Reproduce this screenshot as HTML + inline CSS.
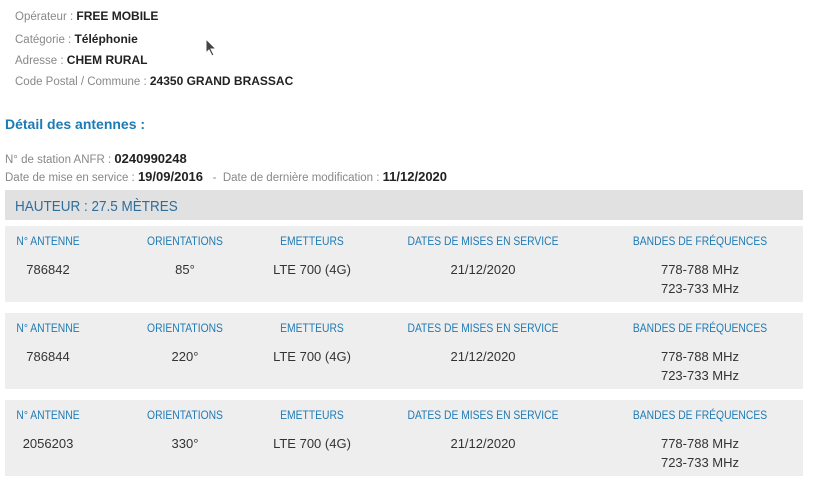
<!DOCTYPE html><html><head><meta charset="utf-8"><style>
body{margin:0;width:813px;height:482px;background:#fff;font-family:"Liberation Sans",sans-serif;position:relative;overflow:hidden}
.l{position:absolute;font-size:11.5px;color:#888;white-space:nowrap}
.l b{color:#222;font-size:12px;font-weight:bold}
.s b{font-size:13px}
.t{position:absolute;left:5px;top:116px;font-size:14px;color:#1b7bb5;font-weight:bold}
.hd{position:absolute;left:5px;top:190px;width:798px;height:30px;background:#e1e1e1;color:#2d6e9c}
.hd span{position:absolute;left:10px;top:8px;font-size:15px;transform:scaleX(0.9);transform-origin:0 0;white-space:nowrap}
.bx{position:absolute;left:5px;width:798px;height:76px;background:#eee}
.c{position:absolute;transform:translateX(-50%) scaleX(0.86);text-align:center;white-space:nowrap}
.h{top:8px;color:#1f7ab5;font-size:12px}
.v{top:34px;color:#333;font-size:13px;line-height:19px;transform:translateX(-50%)}
</style></head><body>
<div class="l" style="left:15px;top:9px">Opérateur : <b>FREE MOBILE</b></div>
<div class="l" style="left:15px;top:32px">Catégorie : <b>Téléphonie</b></div>
<div class="l" style="left:15px;top:53px">Adresse : <b>CHEM RURAL</b></div>
<div class="l" style="left:15px;top:74px">Code Postal / Commune : <b>24350 GRAND BRASSAC</b></div>
<svg style="position:absolute;left:205px;top:38px" width="12" height="20"><path d="M1 1 L1 15 L4 12 L7 18 L9 17 L6 11 L11 11 Z" fill="#444" stroke="#fff" stroke-width="1"/></svg>
<div class="t">Détail des antennes :</div>
<div class="l s" style="left:5px;top:151px">N° de station ANFR : <b>0240990248</b></div>
<div class="l s" style="left:5px;top:169px">Date de mise en service : <b>19/09/2016</b> &nbsp; - &nbsp;Date de dernière modification : <b>11/12/2020</b></div>
<div class="hd"><span>HAUTEUR : 27.5 MÈTRES</span></div>
<div class="bx" style="top:226px">
<div class="c h" style="left:43px">N° ANTENNE</div><div class="c h" style="left:180px">ORIENTATIONS</div><div class="c h" style="left:307px">EMETTEURS</div><div class="c h" style="left:478px">DATES DE MISES EN SERVICE</div><div class="c h" style="left:695px">BANDES DE FRÉQUENCES</div>
<div class="c v" style="left:43px">786842</div><div class="c v" style="left:180px">85°</div><div class="c v" style="left:307px">LTE 700 (4G)</div><div class="c v" style="left:478px">21/12/2020</div><div class="c v" style="left:695px">778-788 MHz<br>723-733 MHz</div></div>
<div class="bx" style="top:313px">
<div class="c h" style="left:43px">N° ANTENNE</div><div class="c h" style="left:180px">ORIENTATIONS</div><div class="c h" style="left:307px">EMETTEURS</div><div class="c h" style="left:478px">DATES DE MISES EN SERVICE</div><div class="c h" style="left:695px">BANDES DE FRÉQUENCES</div>
<div class="c v" style="left:43px">786844</div><div class="c v" style="left:180px">220°</div><div class="c v" style="left:307px">LTE 700 (4G)</div><div class="c v" style="left:478px">21/12/2020</div><div class="c v" style="left:695px">778-788 MHz<br>723-733 MHz</div></div>
<div class="bx" style="top:400px">
<div class="c h" style="left:43px">N° ANTENNE</div><div class="c h" style="left:180px">ORIENTATIONS</div><div class="c h" style="left:307px">EMETTEURS</div><div class="c h" style="left:478px">DATES DE MISES EN SERVICE</div><div class="c h" style="left:695px">BANDES DE FRÉQUENCES</div>
<div class="c v" style="left:43px">2056203</div><div class="c v" style="left:180px">330°</div><div class="c v" style="left:307px">LTE 700 (4G)</div><div class="c v" style="left:478px">21/12/2020</div><div class="c v" style="left:695px">778-788 MHz<br>723-733 MHz</div></div>
</body></html>
